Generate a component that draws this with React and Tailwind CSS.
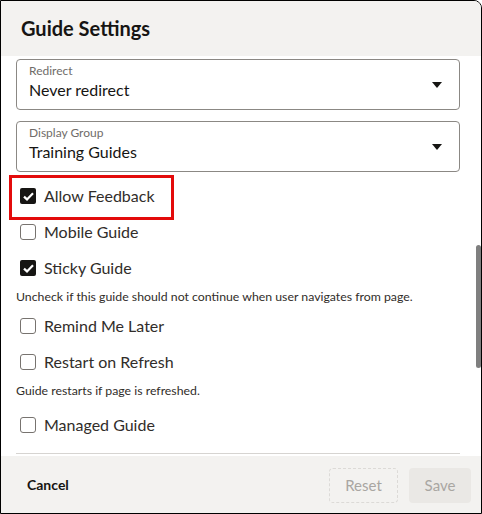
import React, { useState } from 'react';

const font = { fontFamily: 'Lato, "Noto Sans", "Liberation Sans", sans-serif' };

function Caret() {
  return (
    <svg width="10" height="6" viewBox="0 0 10 6" className="shrink-0">
      <path d="M0 0 H10 L5 6 Z" fill="#161513" />
    </svg>
  );
}

function SelectField({ label, value }) {
  return (
    <div className="h-[51px] border border-[#8b8884] rounded-[4px] pl-3 pr-[17px] flex items-center">
      <div className="flex-1 flex flex-col pb-[4px]">
        <span className="text-[12px] leading-[14px] text-[#6f6c69]">{label}</span>
        <span className="text-[16px] leading-[22px] text-[#161513] mt-[1px]">{value}</span>
      </div>
      <Caret />
    </div>
  );
}

function Checkbox({ checked }) {
  if (checked) {
    return (
      <span className="w-4 h-4 rounded-[2px] bg-[#161513] flex items-center justify-center shrink-0">
        <svg width="11" height="9" viewBox="0 0 11 9">
          <path d="M1 4.6 L4 7.4 L10 1.2" fill="none" stroke="#fff" strokeWidth="2.2" />
        </svg>
      </span>
    );
  }
  return <span className="w-4 h-4 rounded-[3px] border border-[#77736f] bg-white shrink-0" />;
}

function CheckRow({ label, checked, onToggle, highlight }) {
  return (
    <div className="relative h-9 flex items-center gap-2 pl-1 cursor-pointer" onClick={onToggle}>
      {highlight && (
        <div className="absolute left-[-7px] top-[-3px] w-[165px] h-[45px] border-[3px] border-[#e30b0b] pointer-events-none" />
      )}
      <Checkbox checked={checked} />
      <span className="text-[16px] text-[#312d2a]">{label}</span>
    </div>
  );
}

function Help({ children, className = '' }) {
  return (
    <div className={`h-[22px] flex items-center text-[12.3px] text-[#312d2a] ${className}`}>{children}</div>
  );
}

export default function App() {
  const [opts, setOpts] = useState({
    feedback: true,
    mobile: false,
    sticky: true,
    remind: false,
    restart: false,
    managed: false,
  });
  const toggle = (k) => setOpts((o) => ({ ...o, [k]: !o[k] }));

  return (
    <div style={font} className="w-[482px] h-[514px] border border-black rounded-tr-[8px] bg-white flex flex-col overflow-hidden">
      {/* Header */}
      <div className="h-[55px] bg-[#f3f2f0] pl-5 flex items-center shrink-0">
        <h1 className="text-[20px] font-bold text-[#161513] pb-[1px]">Guide Settings</h1>
      </div>

      {/* Body */}
      <div className="relative h-[400px] shrink-0">
        <div className="pl-[15px] pr-[21px] pt-[3px] flex flex-col">
          <SelectField label="Redirect" value="Never redirect" />
          <div className="mt-[11px]">
            <SelectField label="Display Group" value="Training Guides" />
          </div>
          <div className="mt-[6px]">
            <CheckRow label="Allow Feedback" checked={opts.feedback} onToggle={() => toggle('feedback')} highlight />
          </div>
          <CheckRow label="Mobile Guide" checked={opts.mobile} onToggle={() => toggle('mobile')} />
          <CheckRow label="Sticky Guide" checked={opts.sticky} onToggle={() => toggle('sticky')} />
          <Help>Uncheck if this guide should not continue when user navigates from page.</Help>
          <CheckRow label="Remind Me Later" checked={opts.remind} onToggle={() => toggle('remind')} />
          <CheckRow label="Restart on Refresh" checked={opts.restart} onToggle={() => toggle('restart')} />
          <Help className="mb-[5px]">Guide restarts if page is refreshed.</Help>
          <CheckRow label="Managed Guide" checked={opts.managed} onToggle={() => toggle('managed')} />
          <div className="mt-[10px] border-t border-[#d6d4d1]" />
        </div>
        {/* scrollbar thumb */}
        <div className="absolute right-0 top-[189px] w-[5px] h-[123px] rounded-full bg-[#7f7f7f]" />
      </div>

      {/* Footer */}
      <div className="flex-1 bg-[#f3f2f0] pl-[26px] pr-[10px] flex items-center">
        <button className="text-[14px] font-bold text-[#161513]">Cancel</button>
        <div className="ml-auto flex items-center gap-[11px] pt-[1px]">
          <button className="w-[69px] h-[35px] rounded-[4px] border border-dashed border-[#dcdad7] text-[15px] text-[#a9a6a2]">
            Reset
          </button>
          <button className="w-[62px] h-[35px] rounded-[4px] bg-[#eae8e5] text-[15px] text-[#a9a6a2]">
            Save
          </button>
        </div>
      </div>
    </div>
  );
}
